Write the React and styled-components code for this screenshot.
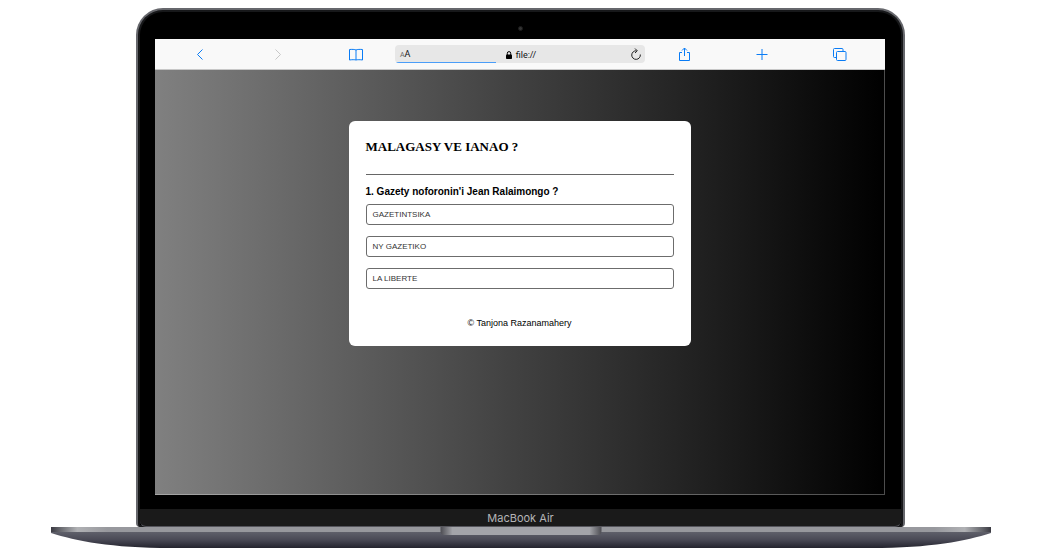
import React from "react";
import styled, { createGlobalStyle } from "styled-components";

const GlobalStyle = createGlobalStyle`
  *, *::before, *::after { box-sizing: border-box; }
  body { margin: 0; background: #fff; font-family: "Liberation Sans", Arial, sans-serif; }
`;

const Page = styled.main`
  padding: 8px 66px 12px 51px;
`;

const Lid = styled.div`
  margin: 0 86px 0 85px;
  background: #000;
  border: 2px solid #66676c;
  border-bottom: 0;
  border-radius: 27px 27px 4px 4px;
  box-shadow: inset 0 0 0 2px #17181a;
  overflow: hidden;
`;

const CameraBar = styled.div`
  height: 29px;
  display: flex;
  align-items: center;
  justify-content: center;
  padding-top: 7px;
`;

const Camera = styled.span`
  width: 5px;
  height: 5px;
  border-radius: 50%;
  background: #333;
  border: 1px solid #1c1c1c;
`;

const Screen = styled.div`
  margin: 0 18px 14px 17px;
`;

const Toolbar = styled.header`
  display: grid;
  grid-template-columns: repeat(3, 1fr) 250px repeat(3, 1fr);
  align-items: center;
  justify-items: center;
  height: 31px;
  padding: 0 6px;
  background: #f9f9f9;
  border-bottom: 1px solid #c8c8c8;
`;

const ToolButton = styled.button`
  display: flex;
  padding: 0;
  border: 0;
  background: none;
  color: ${(p) => (p.disabled ? "#c8c8c8" : "#0a7cf5")};
`;

const AddressBar = styled.div`
  position: relative;
  display: grid;
  grid-template-columns: 1fr auto 1fr;
  align-items: center;
  width: 100%;
  height: 18px;
  padding: 0 3px 0 5px;
  border-radius: 4px;
  background: #e7e7e7;
  color: #111;
  font: 9px/18px Roboto, sans-serif;
  overflow: hidden;
`;

const TextSize = styled.button`
  justify-self: start;
  padding: 0;
  border: 0;
  background: none;
  color: #111;
  font: 9px/18px Roboto, sans-serif;
  small { font-size: 7px; color: #666; }
`;

const Address = styled.span`
  display: flex;
  align-items: center;
  gap: 4px;
`;

const Reload = styled(ToolButton)`
  justify-self: end;
  color: #222;
`;

const Progress = styled.span`
  position: absolute;
  left: 1px;
  bottom: 0;
  width: 40%;
  height: 1px;
  background: #4a9df8;
`;

const Viewport = styled.div`
  display: flex;
  justify-content: center;
  align-items: flex-start;
  min-height: 425px;
  padding: 51px 16px;
  background: linear-gradient(to right, #808080, #000) border-box;
  border: solid rgba(255, 255, 255, 0.3);
  border-width: 0 1px 1px 0;
`;

const Card = styled.section`
  width: 100%;
  max-width: 342px;
  padding: 17px;
  border-radius: 6px;
  background: #fff;
  color: #000;
`;

const Title = styled.h1`
  margin: 0;
  padding-bottom: 18px;
  border-bottom: 1px solid #666;
  font: bold 13px/18px "Liberation Serif", serif;
`;

const Question = styled.h2`
  margin: 8px 0 4px;
  font-size: 10px;
  line-height: 17px;
`;

const Answers = styled.div`
  display: grid;
  gap: 11px;
`;

const Answer = styled.button`
  height: 21px;
  padding: 0 6px;
  border: 1px solid #6c6c6c;
  border-radius: 3px;
  background: #fff;
  color: #333;
  font: 8px/18px "Liberation Sans", Arial, sans-serif;
  text-align: left;
`;

const Credit = styled.footer`
  margin-top: 28px;
  font-size: 9px;
  line-height: 12px;
  text-align: center;
`;

const Chin = styled.div`
  height: 18px;
  margin: 0 2px;
  background: #1a1a1a;
  border-bottom: 1px solid #55555c;
  border-radius: 0 0 6px 6px;
  color: #b4b4b6;
  font: 11px/18px Inter, sans-serif;
  text-align: center;
`;

const Base = styled.div`
  position: relative;
  height: 21px;
`;

const BaseShape = styled.svg`
  display: block;
  width: 100%;
  height: 100%;
`;

const Notch = styled.span`
  position: absolute;
  top: 0;
  left: 50%;
  width: 161px;
  height: 8px;
  transform: translateX(-50%);
  border-radius: 0 0 4px 4px;
  background: linear-gradient(to right, #4c4c52, #a3a4a9 12px, #a3a4a9 149px, #4c4c52);
`;

const icons = {
  back: <path d="M10.5 3.5 5.5 8.5l5 5" />,
  forward: <path d="m5.500 3.500 5 5-5 5" />,
  book: <path d="M8 4C7 3.300 3.500 3.300 1.500 3.500v10.500c2-.4 5.500-.4 6.500 0 1-.4 4.500-.4 6.500 0V3.500C12.500 3.300 9 3.300 8 4v10" />,
  share: <path d="M6 6.500H3.500v8h10v-8H11M8.500 10V2M6 4.500 8.500 2 11 4.500" />,
  plus: <path d="M8 3v11M2.500 8.500h11" />,
  tabs: <><rect x="4.500" y="5.500" width="9.500" height="9" rx="1" /><path d="M4.500 11.500h-2a1 1 0 0 1-1-1v-7a1 1 0 0 1 1-1h7.500a1 1 0 0 1 1 1v2" /></>,
};

function Icon({ name }) {
  return (
    <svg width="16" height="17" viewBox="0 0 16 17" fill="none" stroke="currentColor" aria-hidden="true">
      {icons[name]}
    </svg>
  );
}

function BrowserToolbar() {
  return (
    <Toolbar>
      <ToolButton aria-label="Back"><Icon name="back" /></ToolButton>
      <ToolButton aria-label="Forward" disabled><Icon name="forward" /></ToolButton>
      <ToolButton aria-label="Bookmarks"><Icon name="book" /></ToolButton>
      <AddressBar>
        <TextSize aria-label="Text size"><small>A</small>A</TextSize>
        <Address>
          <svg width="6" height="8" viewBox="0 0 6 8" aria-hidden="true">
            <rect y="3.500" width="6" height="4.500" rx="0.800" fill="#000" />
            <path d="M1.300 4V2.300a1.700 1.700 0 0 1 3.400 0V4" fill="none" stroke="#000" />
          </svg>
          file://
        </Address>
        <Reload aria-label="Reload">
          <svg width="12" height="14" viewBox="0 0 12 14" fill="none" stroke="currentColor" aria-hidden="true">
            <path d="M6.500 2.800A4.300 4.300 0 1 0 10.300 6.500M5 .5l2.300 2.300L5 5" />
          </svg>
        </Reload>
        <Progress />
      </AddressBar>
      <ToolButton aria-label="Share"><Icon name="share" /></ToolButton>
      <ToolButton aria-label="New tab"><Icon name="plus" /></ToolButton>
      <ToolButton aria-label="Show tabs"><Icon name="tabs" /></ToolButton>
    </Toolbar>
  );
}

function LaptopBase() {
  return (
    <Base>
      <BaseShape viewBox="0 0 940 21" preserveAspectRatio="none" aria-hidden="true">
        <defs>
          <linearGradient id="under" x1="0" y1="0" x2="0" y2="1">
            <stop offset="0.250" stopColor="#5e5f69" />
            <stop offset="0.600" stopColor="#4a4a56" />
            <stop offset="1" stopColor="#24242e" />
          </linearGradient>
          <linearGradient id="edge">
            <stop offset="0" stopColor="#3a3a42" />
            <stop offset="0.010" stopColor="#67686e" />
            <stop offset="0.028" stopColor="#b0b1b4" />
            <stop offset="0.060" stopColor="#97989d" />
            <stop offset="0.940" stopColor="#97989d" />
            <stop offset="0.972" stopColor="#b0b1b4" />
            <stop offset="0.990" stopColor="#67686e" />
            <stop offset="1" stopColor="#3a3a42" />
          </linearGradient>
        </defs>
        <path d="M0 0H940V6C915 14 880 21 820 21H120C60 21 25 14 0 6Z" fill="url(#under)" />
        <path d="M0 0H940V5H0Z" fill="url(#edge)" />
      </BaseShape>
      <Notch />
    </Base>
  );
}

const answers = ["GAZETINTSIKA", "NY GAZETIKO", "LA LIBERTE"];

export default function App() {
  return (
    <>
      <GlobalStyle />
      <Page>
        <Lid>
          <CameraBar><Camera /></CameraBar>
          <Screen>
            <BrowserToolbar />
            <Viewport>
              <Card>
                <Title>MALAGASY VE IANAO ?</Title>
                <Question>1. Gazety noforonin'i Jean Ralaimongo ?</Question>
                <Answers>
                  {answers.map((a) => <Answer key={a}>{a}</Answer>)}
                </Answers>
                <Credit>© Tanjona Razanamahery</Credit>
              </Card>
            </Viewport>
          </Screen>
          <Chin>MacBook Air</Chin>
        </Lid>
        <LaptopBase />
      </Page>
    </>
  );
}
